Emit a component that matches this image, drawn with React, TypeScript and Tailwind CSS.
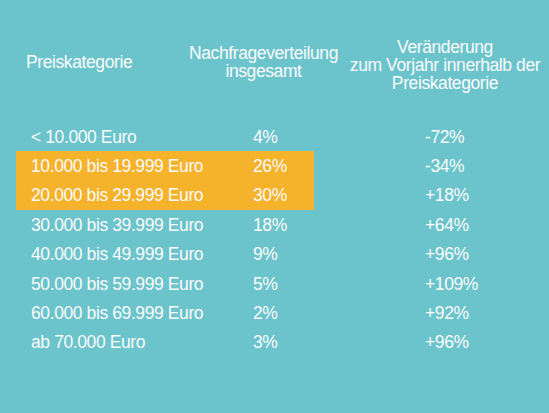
const rows = [
  { label: "< 10.000 Euro", share: "4%", change: "-72%", hl: false },
  { label: "10.000 bis 19.999 Euro", share: "26%", change: "-34%", hl: true },
  { label: "20.000 bis 29.999 Euro", share: "30%", change: "+18%", hl: true },
  { label: "30.000 bis 39.999 Euro", share: "18%", change: "+64%", hl: false },
  { label: "40.000 bis 49.999 Euro", share: "9%", change: "+96%", hl: false },
  { label: "50.000 bis 59.999 Euro", share: "5%", change: "+109%", hl: false },
  { label: "60.000 bis 69.999 Euro", share: "2%", change: "+92%", hl: false },
  { label: "ab 70.000 Euro", share: "3%", change: "+96%", hl: false },
];

const App = () => {
  return (
    <div className="w-[549px] h-[413px] bg-[#6bc3cb] text-[#fbfbfb] font-['Liberation_Sans',Arial,sans-serif] tracking-[-0.4px]">
      {/* header */}
      <div className="flex h-[122px] pt-[38px] text-[17.5px] leading-[18px]">
        <div className="ml-[26px] mt-[15px] w-[152px]">Preiskategorie</div>
        <div className="mt-[6px] w-[171px] flex flex-col items-center whitespace-nowrap">
          <span>Nachfrageverteilung</span>
          <span>insgesamt</span>
        </div>
        <div className="w-[192px] flex flex-col items-center whitespace-nowrap">
          <span>Veränderung</span>
          <span>zum Vorjahr innerhalb der</span>
          <span>Preiskategorie</span>
        </div>
      </div>

      {/* rows */}
      <div className="flex flex-col text-[17.5px]">
        {rows.map((r) => (
          <div key={r.label} className="flex h-[29.4px] items-center">
            <div className={`ml-[16px] flex h-full w-[298px] items-center ${r.hl ? "bg-[#f5b22b]" : ""}`}>
              <span className="w-[237px] pl-[15px]">{r.label}</span>
              <span>{r.share}</span>
            </div>
            <span className="ml-[111px]">{r.change}</span>
          </div>
        ))}
      </div>
    </div>
  );
};

export default App;
